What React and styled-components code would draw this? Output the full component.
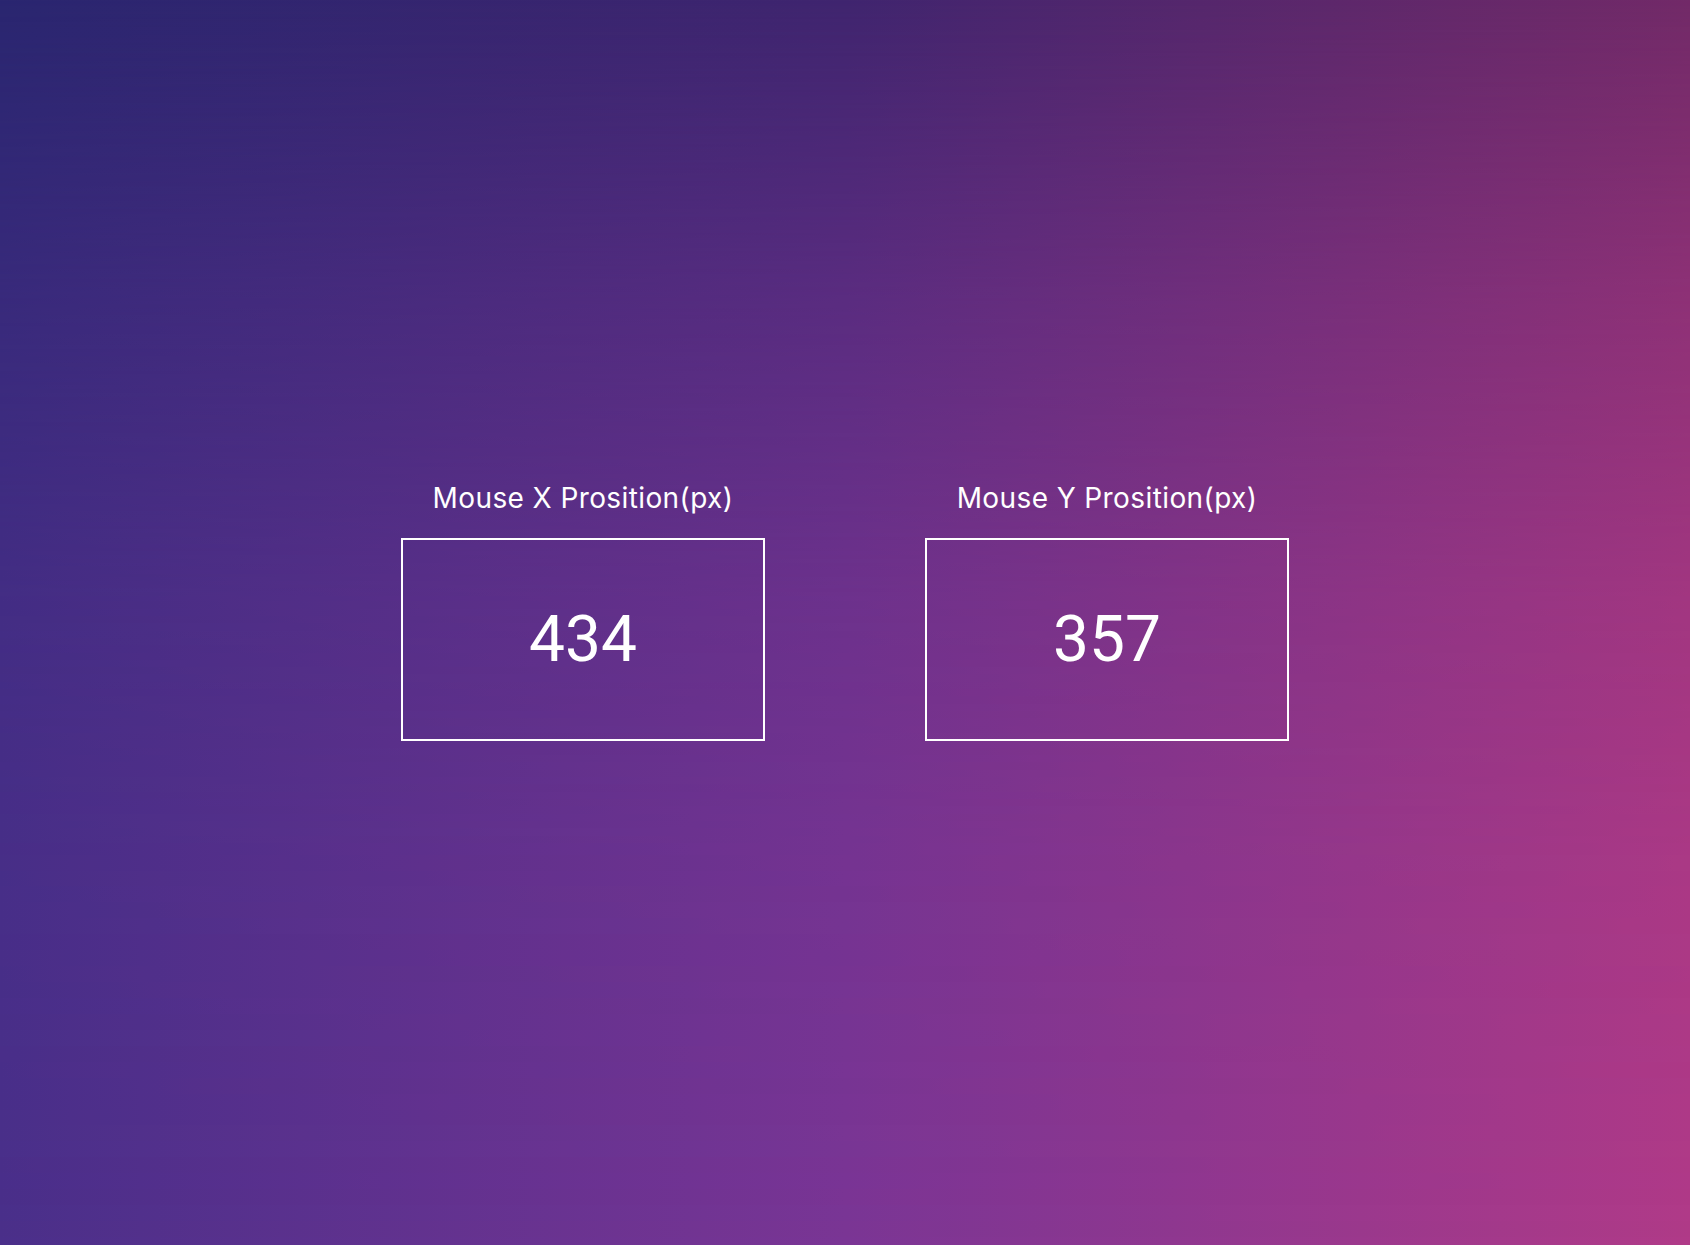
import React from "react";
import styled, { createGlobalStyle } from "styled-components";

const GlobalStyle = createGlobalStyle`
  html, body { margin: 0; padding: 0; }
  body { font-family: Inter, "Noto Sans", sans-serif; }
`;

const Page = styled.main`
  position: relative;
  min-height: 100vh;
  display: flex;
  align-items: center;
  justify-content: center;
  background: linear-gradient(to right, #2a2670 0%, #40256f 50%, #722a68 100%);
  isolation: isolate;
  &::before {
    content: "";
    position: absolute;
    inset: 0;
    z-index: -1;
    background: linear-gradient(to right, #4a2f8a 0%, #7a3595 50%, #b03a88 100%);
    -webkit-mask-image: linear-gradient(
      to bottom,
      rgba(0, 0, 0, 0) 0%,
      rgba(0, 0, 0, 0.45) 24%,
      rgba(0, 0, 0, 0.77) 48%,
      rgba(0, 0, 0, 0.9) 68%,
      rgba(0, 0, 0, 1) 100%
    );
    mask-image: linear-gradient(
      to bottom,
      rgba(0, 0, 0, 0) 0%,
      rgba(0, 0, 0, 0.45) 24%,
      rgba(0, 0, 0, 0.77) 48%,
      rgba(0, 0, 0, 0.9) 68%,
      rgba(0, 0, 0, 1) 100%
    );
  }
`;

const Readouts = styled.section`
  display: flex;
  gap: 160px;
  margin-top: -22px;
`;

const Readout = styled.div`
  display: flex;
  flex-direction: column;
  align-items: center;
  gap: 24px;
`;

const Label = styled.h2`
  margin: 0;
  font-family: Inter, "Noto Sans", sans-serif;
  font-weight: 400;
  font-size: 28px;
  line-height: 32px;
  color: #fff;
  letter-spacing: 0.4px;
`;

const ValueBox = styled.div`
  box-sizing: border-box;
  width: 364px;
  height: 203px;
  border: 2px solid #fff;
  display: flex;
  align-items: center;
  justify-content: center;
  font-family: Roboto, "Liberation Sans", sans-serif;
  font-size: 64px;
  color: #fff;
`;

const data = [
  { label: "Mouse X Prosition(px)", value: 434 },
  { label: "Mouse Y Prosition(px)", value: 357 },
];

export default function App() {
  return (
    <>
      <GlobalStyle />
      <Page>
        <Readouts>
          {data.map((d) => (
            <Readout key={d.label}>
              <Label>{d.label}</Label>
              <ValueBox>{d.value}</ValueBox>
            </Readout>
          ))}
        </Readouts>
      </Page>
    </>
  );
}
